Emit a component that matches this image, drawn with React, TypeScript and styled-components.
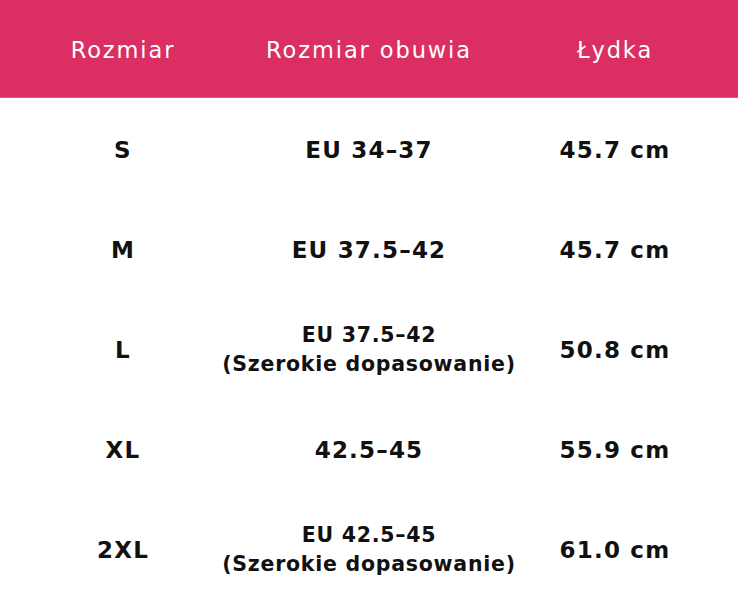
import React from "react";
import styled, { createGlobalStyle } from "styled-components";

const Global = createGlobalStyle`
  html, body { margin: 0; padding: 0; background: #ffffff; }
  body { font-family: "DejaVu Sans", "Noto Sans", sans-serif; }
`;

const Table = styled.div`
  width: 738px;
  display: grid;
  grid-template-columns: repeat(3, minmax(0, 1fr));
`;

const HeadCell = styled.div`
  height: 98px;
  padding-top: 3px;
  border-bottom: 1px solid #e2557f;
  background: #db2f63;
  color: #ffffff;
  display: flex;
  align-items: center;
  justify-content: center;
  font-size: 22.5px;
  font-weight: 400;
  letter-spacing: 1.9px;
  white-space: nowrap;
  box-sizing: border-box;
`;

const Cell = styled.div<{ $small?: boolean }>`
  height: 100px;
  padding-top: 4px;
  box-sizing: border-box;
  display: flex;
  flex-direction: column;
  align-items: center;
  justify-content: center;
  text-align: center;
  white-space: nowrap;
  color: #111111;
  font-weight: 700;
  font-size: ${(p) => (p.$small ? "20.5px" : "23px")};
  line-height: ${(p) => (p.$small ? "29px" : "28px")};
  letter-spacing: ${(p) => (p.$small ? "0.75px" : "1.2px")};
`;

type Row = { size: string; shoe: string[]; calf: string };

const rows: Row[] = [
  { size: "S", shoe: ["EU 34–37"], calf: "45.7 cm" },
  { size: "M", shoe: ["EU 37.5–42"], calf: "45.7 cm" },
  { size: "L", shoe: ["EU 37.5–42", "(Szerokie dopasowanie)"], calf: "50.8 cm" },
  { size: "XL", shoe: ["42.5–45"], calf: "55.9 cm" },
  { size: "2XL", shoe: ["EU 42.5–45", "(Szerokie dopasowanie)"], calf: "61.0 cm" },
];

export default function App() {
  return (
    <>
      <Global />
      <Table>
        <HeadCell>Rozmiar</HeadCell>
        <HeadCell>Rozmiar obuwia</HeadCell>
        <HeadCell>Łydka</HeadCell>
        {rows.map((r) => (
          <React.Fragment key={r.size}>
            <Cell>{r.size}</Cell>
            <Cell $small={r.shoe.length > 1}>
              {r.shoe.map((l) => (
                <span key={l}>{l}</span>
              ))}
            </Cell>
            <Cell>{r.calf}</Cell>
          </React.Fragment>
        ))}
      </Table>
    </>
  );
}
